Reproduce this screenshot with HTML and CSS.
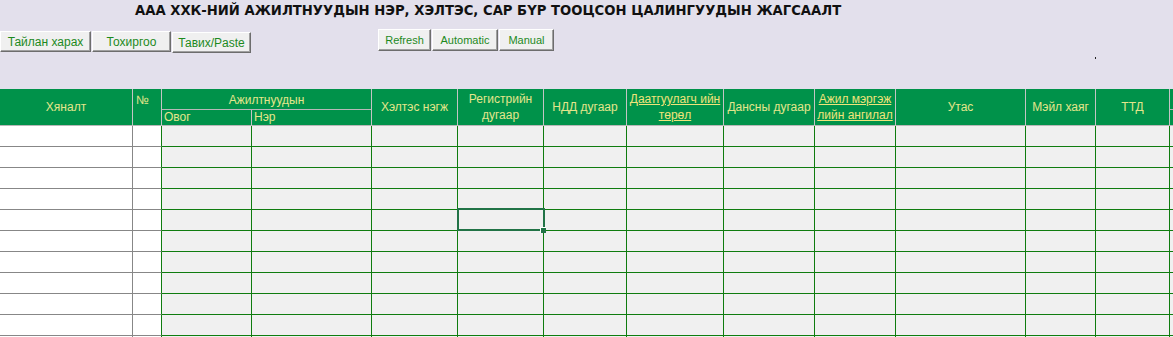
FILE: index.html
```html
<!DOCTYPE html>
<html lang="mn">
<head>
<meta charset="utf-8">
<title>Ажилтнуудын жагсаалт</title>
<link rel="stylesheet" href="styles.css">
</head>
<body>
<div class="top">
  <h1 class="title">ААА ХХК-НИЙ АЖИЛТНУУДЫН НЭР, ХЭЛТЭС, САР БҮР ТООЦСОН ЦАЛИНГУУДЫН ЖАГСААЛТ</h1>
  <div class="toolbar">
    <div class="group g1">
      <button class="btn b1">Тайлан харах</button>
      <button class="btn b2">Тохиргоо</button>
      <button class="btn b3">Тавих/Paste</button>
    </div>
    <div class="group g2">
      <button class="btn s b4">Refresh</button>
      <button class="btn s b5">Automatic</button>
      <button class="btn s b6">Manual</button>
    </div>
    <span class="dot"></span>
  </div>
</div>

<div class="sheet">
  <div class="head">
    <div class="h c-ctrl">Хяналт</div>
    <div class="h c-no">№</div>
    <div class="h c-grp">Ажилтнуудын</div>
    <div class="h c-sub1">Овог</div>
    <div class="h c-sub2">Нэр</div>
    <div class="h c-full c4">Хэлтэс нэгж</div>
    <div class="h c-full c5">Регистрийн<br>дугаар</div>
    <div class="h c-full c6">НДД дугаар</div>
    <div class="h c-full c7 link"><span>Даатгуулагч ийн төрөл</span></div>
    <div class="h c-full c8">Дансны дугаар</div>
    <div class="h c-full c9 link"><span>Ажил мэргэж лийн ангилал</span></div>
    <div class="h c-full c10">Утас</div>
    <div class="h c-full c11">Мэйл хаяг</div>
    <div class="h c-full c12">ТТД</div>
    <div class="h c-x1"></div>
    <div class="h c-x2"></div>
  </div>

  <div class="body">
    <div class="row"><span></span><span></span><span></span><span></span><span></span><span></span><span></span><span></span><span></span><span></span><span></span><span></span><span></span><span></span></div>
    <div class="row"><span></span><span></span><span></span><span></span><span></span><span></span><span></span><span></span><span></span><span></span><span></span><span></span><span></span><span></span></div>
    <div class="row"><span></span><span></span><span></span><span></span><span></span><span></span><span></span><span></span><span></span><span></span><span></span><span></span><span></span><span></span></div>
    <div class="row"><span></span><span></span><span></span><span></span><span></span><span></span><span></span><span></span><span></span><span></span><span></span><span></span><span></span><span></span></div>
    <div class="row"><span></span><span></span><span></span><span></span><span></span><span class="sel"></span><span></span><span></span><span></span><span></span><span></span><span></span><span></span><span></span></div>
    <div class="row"><span></span><span></span><span></span><span></span><span></span><span></span><span></span><span></span><span></span><span></span><span></span><span></span><span></span><span></span></div>
    <div class="row"><span></span><span></span><span></span><span></span><span></span><span></span><span></span><span></span><span></span><span></span><span></span><span></span><span></span><span></span></div>
    <div class="row"><span></span><span></span><span></span><span></span><span></span><span></span><span></span><span></span><span></span><span></span><span></span><span></span><span></span><span></span></div>
    <div class="row"><span></span><span></span><span></span><span></span><span></span><span></span><span></span><span></span><span></span><span></span><span></span><span></span><span></span><span></span></div>
    <div class="row"><span></span><span></span><span></span><span></span><span></span><span></span><span></span><span></span><span></span><span></span><span></span><span></span><span></span><span></span></div>
    <div class="row"><span></span><span></span><span></span><span></span><span></span><span></span><span></span><span></span><span></span><span></span><span></span><span></span><span></span><span></span></div>
  </div>
</div>
</body>
</html>
```
FILE: styles.css
```css
*, *::before, *::after { box-sizing: border-box; }
html, body {
  margin: 0;
  padding: 0;
  width: 1173px;
  height: 337px;
  overflow: hidden;
  background: #f0f0f0;
}
body { font-family: "Liberation Sans", Arial, sans-serif; }

.top {
  height: 89px;
  background: #e3e0ec;
  padding-top: 2px;
}
.title {
  margin: 0 0 0 135px;
  font-family: "DejaVu Sans", Verdana, sans-serif;
  font-weight: bold;
  font-size: 13.2px;
  line-height: 18px;
  color: #111;
  white-space: nowrap;
}
.toolbar {
  display: flex;
  align-items: flex-start;
  margin-top: 9px;
}
.group { display: flex; align-items: flex-start; }
.g1 { margin-top: 2px; }
.g2 { margin-left: 126px; }

.btn {
  height: 21px;
  padding: 0;
  margin: 0 1px 0 0;
  background: #f0f0f0;
  border: 1px solid;
  border-color: #ffffff #6d6d6d #6d6d6d #ffffff;
  box-shadow: inset -1px -1px 0 #a0a0a0;
  color: #1d8a1d;
  font-family: "Liberation Sans", Arial, sans-serif;
  font-size: 12px;
  line-height: 18px;
  text-align: center;
}
.b1 { width: 91px; }
.b2 { width: 79px; }
.b3 { width: 79px; margin-top: 1px; }
.btn.s { font-size: 11px; height: 22px; }
.b4 { width: 53px; }
.b5 { width: 66px; }
.b6 { width: 55px; }
.dot {
  width: 1px;
  height: 2px;
  background: #222;
  margin-left: 540px;
  margin-top: 28px;
}

.sheet { width: 1173px; }

.head, .row {
  display: grid;
  grid-template-columns: 133px 29px 90px 120px 86px 86px 83px 97px 91px 81px 130px 70px 74px 1fr;
}
.head {
  grid-template-rows: 21px 16px;
  background: #00924a;
  color: #e4e68c;
  font-size: 12px;
}
.h {
  border-right: 1px solid #c4c4c4;
  border-bottom: 1px solid #b8b8b8;
  display: flex;
  align-items: center;
  justify-content: center;
  text-align: center;
  line-height: 16px;
  white-space: nowrap;
}
.c-ctrl { grid-column: 1; grid-row: 1 / 3; padding-bottom: 1px; }
.c-no { grid-column: 2; grid-row: 1 / 3; align-items: flex-start; justify-content: flex-start; padding: 3px 0 0 3px; }
.c-grp { grid-column: 3 / 5; grid-row: 1; padding-top: 1px; }
.c-sub1, .c-sub2 { grid-row: 2; justify-content: flex-start; padding-left: 2px; line-height: 15px; }
.c-sub1 { grid-column: 3; }
.c-sub2 { grid-column: 4; }
.c-full { grid-row: 1 / 3; }
.c4 { grid-column: 5; }
.c5 { grid-column: 6; }
.c6 { grid-column: 7; }
.c7 { grid-column: 8; }
.c8 { grid-column: 9; }
.c9 { grid-column: 10; }
.c10 { grid-column: 11; }
.c11 { grid-column: 12; }
.c12 { grid-column: 13; }
.c-x1 { grid-column: 14; grid-row: 1; border-right: 0; }
.c-x2 { grid-column: 14; grid-row: 2; border-right: 0; }
.link { white-space: normal; color: #f0e47a; }
.link span { text-decoration: underline; display: block; padding: 0 2px; }

.body { height: 211px; overflow: hidden; }
.row { height: 21px; }
.row span {
  display: block;
  height: 21px;
  background: #f0f0f0;
  border-right: 1px solid #0f7c0f;
  border-bottom: 1px solid #0f7c0f;
}
.row span:nth-child(1) {
  background: #ffffff;
  border-right-color: #878787;
  border-bottom-color: #878787;
}
.row span:nth-child(2) {
  background: #ffffff;
  border-bottom-color: #878787;
}
.row span:nth-child(14) { border-right: 0; }

.row span.sel { position: relative; }
.sel::before {
  content: "";
  position: absolute;
  left: -1px;
  top: -2px;
  width: 88px;
  height: 23px;
  border: 2px solid #217346;
}
.sel::after {
  content: "";
  position: absolute;
  left: 82px;
  top: 17px;
  width: 6px;
  height: 6px;
  background: #217346;
  border-left: 1px solid #fff;
  border-top: 1px solid #fff;
}
```
